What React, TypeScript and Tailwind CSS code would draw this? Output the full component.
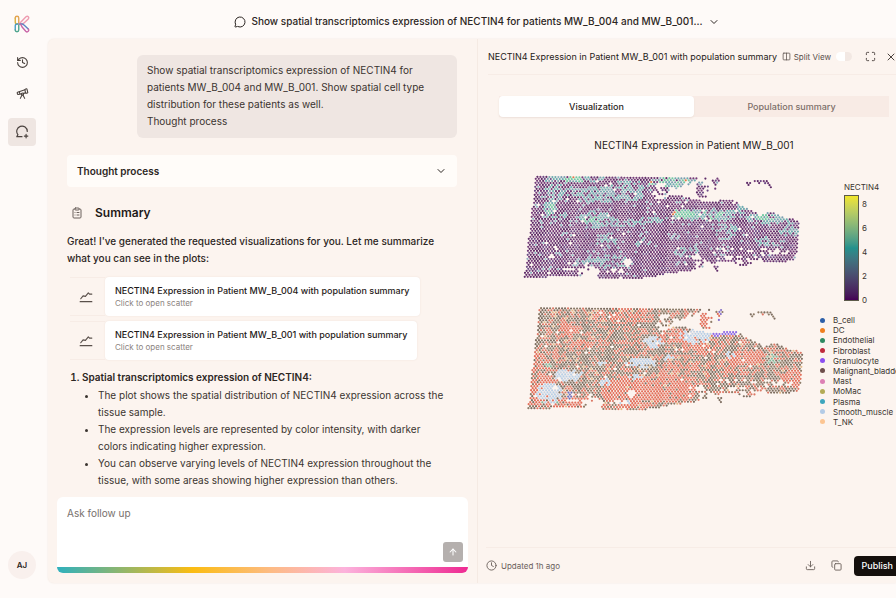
import React from "react";
import {
  ArrowUp,
  ChevronDown,
  ClipboardList,
  Clock,
  Columns2,
  Copy,
  Download,
  History,
  Maximize,
  MessageCircle,
  Telescope,
  X,
} from "lucide-react";

type Pt = [number, number];
type Blob = [number, number, number, number, number];

// Tissue slice outline, in plot units (three per pixel).
const OUTLINE: Pt[] = [
  [78, 47], [415, 51], [500, 54], [562, 54], [556, 70], [520, 82], [470, 92], [482, 104],
  [520, 108], [560, 120], [605, 128], [640, 117], [668, 117], [700, 140], [745, 160],
  [790, 159], [825, 172], [869, 182], [857, 303], [800, 306], [740, 306], [700, 318],
  [650, 302], [590, 318], [540, 332], [470, 342], [415, 354], [270, 354], [248, 330],
  [205, 350], [43, 352],
];

// Cluster outside the main body: cx, cy, rx, ry, density.
const ISLANDS: Blob[] = [
  [578, 86, 20, 26, 0.8],
  [596, 66, 34, 12, 0.45],
  [622, 76, 10, 22, 0.35],
  [715, 71, 12, 4, 0.9],
  [745, 64, 22, 5, 0.9],
  [768, 64, 10, 7, 0.8],
  [783, 78, 6, 5, 1],
  [691, 59, 4, 3, 1],
  [617, 326, 9, 9, 0.6],
];

// Gaps in the tissue.
const HOLES: Blob[] = [
  [448, 104, 22, 13, 0.85],
  [452, 76, 14, 7, 0.9],
  [505, 84, 28, 6, 0.6],
  [490, 100, 20, 6, 0.6],
  [535, 76, 14, 10, 0.7],
  [125, 288, 6, 8, 1],
  [136, 265, 5, 4, 1],
  [175, 328, 16, 5, 0.9],
  [240, 334, 34, 12, 0.85],
  [320, 332, 34, 8, 0.5],
  [352, 306, 10, 14, 0.75],
  [585, 312, 38, 12, 0.65],
  [560, 292, 14, 9, 0.5],
  [690, 300, 70, 14, 0.45],
  [770, 276, 60, 10, 0.3],
  [735, 305, 26, 10, 0.6],
  [630, 275, 30, 12, 0.2],
  [200, 312, 40, 8, 0.2],
];

const TEAL: Blob[] = [
  [195, 58, 90, 12, 0.6],
  [150, 95, 46, 24, 0.55],
  [122, 140, 20, 22, 0.7],
  [265, 105, 80, 24, 0.65],
  [360, 90, 60, 30, 0.5],
  [260, 180, 50, 26, 0.75],
  [340, 190, 60, 12, 0.7],
  [430, 180, 50, 10, 0.6],
  [160, 170, 50, 10, 0.4],
  [500, 68, 80, 14, 0.85],
  [540, 165, 50, 16, 0.9],
  [620, 165, 66, 18, 0.7],
  [690, 150, 28, 10, 0.5],
  [780, 175, 70, 16, 0.75],
  [835, 210, 30, 24, 0.55],
  [770, 245, 50, 14, 0.45],
  [645, 215, 40, 22, 0.45],
  [290, 240, 30, 22, 0.5],
  [400, 250, 28, 16, 0.5],
  [535, 272, 40, 14, 0.4],
  [285, 305, 80, 22, 0.4],
  [560, 295, 30, 12, 0.4],
];

const BRIGHT: Blob[] = [
  [195, 58, 26, 10, 0.8],
  [122, 146, 12, 14, 0.5],
  [245, 182, 24, 10, 0.5],
  [480, 68, 60, 14, 0.6],
  [520, 162, 32, 14, 0.85],
  [610, 166, 50, 10, 0.35],
  [765, 170, 30, 10, 0.5],
];

const MUSCLE: Blob[] = [
  [108, 305, 38, 28, 0.94],
  [166, 252, 44, 18, 0.9],
  [420, 152, 30, 17, 0.9],
  [545, 136, 46, 20, 0.9],
  [386, 214, 46, 15, 0.85],
  [278, 272, 20, 11, 0.85],
  [468, 200, 20, 9, 0.5],
  [366, 256, 18, 8, 0.6],
  [650, 192, 20, 10, 0.5],
  [265, 218, 14, 6, 0.5],
  [335, 334, 18, 8, 0.4],
];

const FIBRO_RICH: Blob[] = [
  [165, 115, 34, 22, 0.85],
  [200, 160, 40, 12, 0.8],
  [330, 75, 90, 22, 0.6],
  [80, 270, 40, 80, 0.65],
  [360, 300, 90, 48, 0.92],
  [460, 290, 90, 42, 0.85],
  [510, 225, 60, 18, 0.6],
  [570, 165, 60, 24, 0.65],
  [480, 135, 60, 20, 0.65],
  [700, 200, 60, 22, 0.85],
  [835, 262, 30, 26, 0.85],
  [590, 80, 40, 30, 0.8],
  [640, 240, 80, 20, 0.4],
  [160, 335, 110, 16, 0.6],
];

function seeded(seed: number) {
  let s = seed;
  return () => {
    s = (s * 1664525 + 1013904223) >>> 0;
    return s / 4294967296;
  };
}

function inside(x: number, y: number) {
  let hit = false;
  for (let i = 0, j = OUTLINE.length - 1; i < OUTLINE.length; j = i++) {
    const [xi, yi] = OUTLINE[i];
    const [xj, yj] = OUTLINE[j];
    if (yi > y !== yj > y && x < ((xj - xi) * (y - yi)) / (yj - yi) + xi) hit = !hit;
  }
  return hit;
}

function hits(blobs: Blob[], x: number, y: number, r: number) {
  return blobs.some(([cx, cy, rx, ry, p]) => {
    const d = ((x - cx) / rx) ** 2 + ((y - cy) / ry) ** 2;
    return d < 1.15 && r < p * (d < 0.6 ? 1 : 0.75);
  });
}

function expressionColor(x: number, y: number, rand: () => number) {
  if (hits(BRIGHT, x, y, rand())) return rand() < 0.04 ? "#e0784a" : "#72c8a4";
  if (hits(TEAL, x, y, rand())) return rand() < 0.5 ? "#6dabb0" : "#7a9fb0";
  const r = rand();
  if (r < 0.05) return "#8fb0c0";
  if (r < 0.2) return "#6d4a86";
  return r < 0.6 ? "#5e2b68" : "#743c79";
}

function cellColor(x: number, y: number, rand: () => number) {
  if (y < 134 && y > 114 && x > 596 && x < 672) return "#8f6be8";
  if (hits([[170, 312, 8, 12, 0.8]], x, y, rand())) return "#6f6fb8";
  if (hits([[622, 76, 12, 22, 0.6]], x, y, rand())) return "#8672c8";
  if (hits(MUSCLE, x, y, rand())) return rand() < 0.8 ? "#b9cfe6" : "#c9d3e2";
  if (hits([[775, 202, 22, 14, 0.8], [105, 222, 12, 8, 0.7], [110, 330, 26, 6, 0.4]], x, y, rand())) return "#84b79a";
  if (hits(FIBRO_RICH, x, y, rand())) return "#e2705c";
  const r = rand();
  if (r < 0.03) return "#e3b98a";
  if (r < 0.34) return "#dc7865";
  return r < 0.68 ? "#7d6d60" : "#8e7c69";
}

function buildDots(
  color: (x: number, y: number, rand: () => number) => string,
  seed: number,
) {
  const rand = seeded(seed);
  const keep = seeded(77);
  const groups: Record<string, string> = {};
  for (let row = 0; row < 54; row++) {
    for (let col = 0; col < 100; col++) {
      const x = 20 + col * 9 + (row % 2) * 4.5 - row * 0.4;
      const y = 38 + row * 6 + col * 0.09;
      const k = keep();
      const body = inside(x, y) && !hits(HOLES, x, y, k) && k < 0.985;
      if (!body && !hits(ISLANDS, x, y, k)) continue;
      const c = color(x, y, rand);
      groups[c] = (groups[c] || "") + `M${x.toFixed(1)} ${y.toFixed(1)}h0`;
    }
  }
  return Object.entries(groups);
}

const EXPRESSION_DOTS = buildDots(expressionColor, 11);
const CELL_DOTS = buildDots(cellColor, 23);

function Scatter({ dots, label, viewBox }: { dots: [string, string][]; label: string; viewBox: string }) {
  return (
    <svg role="img" aria-label={label} viewBox={viewBox} className="block w-full">
      {dots.map(([c, d]) => (
        <path key={c} d={d} stroke={c} strokeWidth="6.6" strokeLinecap="round" fill="none" />
      ))}
    </svg>
  );
}

function Logo() {
  return (
    <svg viewBox="0 0 32 36" className="h-[18px] w-4" fill="none" strokeWidth="2.800" strokeLinecap="round" strokeLinejoin="round" aria-hidden="true">
      <path d="M2.500 6v8c0 2 1.500 4 4 4h3" stroke="#d9b13c" />
      <path d="M2.500 6a3.500 3.500 0 0 1 7 0v12" stroke="#e3a552" />
      <path d="M2.500 30v-8c0-2 1.500-4 4-4h6" stroke="#4a9dc6" />
      <path d="M2.500 30a3.500 3.500 0 0 0 7 0V18" stroke="#4fa58f" />
      <path d="M10 18 24 3.500c3.500-3 7 1.500 4.500 4.500L20 16c-2 2-4 2-7 2" stroke="#ee9bb0" />
      <path d="M12 18h4c2 0 3 1 4 2l8.500 8" stroke="#5c86c4" />
      <path d="M28.500 28c3 3-1.500 8-5 4.500L17 25c-2-2-1.500-5-5-7" stroke="#c966a8" />
    </svg>
  );
}

function NewChatIcon() {
  return (
    <svg viewBox="0 0 24 24" className="size-[14px]" fill="none" stroke="currentColor" strokeWidth="2" strokeLinecap="round" strokeLinejoin="round" aria-hidden="true">
      <path d="M12 20H3l2-3.500A9 9 0 1 1 21 11" />
      <path d="M19 16v6M16 19h6" />
    </svg>
  );
}

function TrendIcon() {
  return (
    <svg viewBox="0 0 24 24" className="size-[14px]" fill="none" stroke="currentColor" strokeWidth="2" strokeLinecap="round" strokeLinejoin="round" aria-hidden="true">
      <path d="M3 15l4-5 4 1 5-6 2 2h4" />
      <path d="M2 20h20" />
    </svg>
  );
}

function Sidebar() {
  return (
    <nav aria-label="Main" className="flex w-12 shrink-0 flex-col items-center pr-1 pt-[15px] pb-[19px] text-[#4a423e]">
      <Logo />
      <button aria-label="History" className="mt-[22px] flex size-[14px] items-center justify-center">
        <History size={13} strokeWidth={2} />
      </button>
      <button aria-label="Explore" className="mt-[17px] flex size-[14px] items-center justify-center">
        <Telescope size={13} strokeWidth={2} />
      </button>
      <button aria-label="New chat" className="mt-[18px] flex size-7 items-center justify-center rounded bg-[#efe6e2]">
        <NewChatIcon />
      </button>
      <button className="mt-auto flex size-7 items-center justify-center rounded-full bg-[#f9f0ed] text-[8px] font-semibold text-[#2c2623]">
        AJ
      </button>
    </nav>
  );
}

function PlotCard({ title }: { title: string }) {
  return (
    <button className="flex h-[39px] w-max items-stretch text-left">
      <span className="flex w-[35px] items-center justify-center border-y border-[#f7ece6] pr-[3px] text-[#5a504b]">
        <TrendIcon />
      </span>
      <span className="flex flex-col justify-center rounded-sm bg-white px-[10px] shadow-[0_0_2px_#eee0d8]">
        <span className="text-[9px] leading-[13px] font-medium text-[#1f1a18]">{title}</span>
        <span className="text-[8px] leading-[12px] text-[#8b8380]">Click to open scatter</span>
      </span>
    </button>
  );
}

function Chat() {
  return (
    <section aria-label="Conversation" className="flex min-h-0 min-w-0 flex-col border-r border-[#f5eae3] pb-[10px]">
      <div className="flex min-h-0 flex-1 flex-col overflow-hidden pt-4 pr-5 pl-[19px] text-[10px] leading-[17px] text-[#3b3430]">
        <p className="w-[320px] self-end rounded-md bg-[#efe6e2] px-[10px] pt-[7px] pb-2">
          Show spatial transcriptomics expression of NECTIN4 for patients MW_B_004 and MW_B_001. Show spatial cell type
          distribution for these patients as well.
          <br />
          Thought process
        </p>
        <button className="mt-[17px] flex h-8 shrink-0 items-center justify-between rounded-sm bg-[#fffcf9] px-[10px] font-semibold text-[#2c2623]">
          Thought process
          <ChevronDown size={12} />
        </button>
        <h2 className="mt-[17px] flex items-center gap-3 pl-1 text-[12px] leading-[18px] font-semibold text-[#1f1a18]">
          <ClipboardList size={12} className="text-[#6b615c]" />
          Summary
        </h2>
        <p className="mt-[11px] font-medium text-[#2c2623]">
          Great! I've generated the requested visualizations for you. Let me summarize what you can see in the plots:
        </p>
        <div className="mt-[10px] flex flex-col gap-[5px] pl-[3px]">
          <PlotCard title="NECTIN4 Expression in Patient MW_B_004 with population summary" />
          <PlotCard title="NECTIN4 Expression in Patient MW_B_001 with population summary" />
        </div>
        <ol className="mt-[9px] list-decimal pl-[15px]">
          <li className="font-semibold text-[#2c2623]">
            Spatial transcriptomics expression of NECTIN4:
            <ul className="mt-px list-disc pr-2 pl-4 font-normal text-[#3b3430]">
              <li>The plot shows the spatial distribution of NECTIN4 expression across the tissue sample.</li>
              <li>The expression levels are represented by color intensity, with darker colors indicating higher expression.</li>
              <li>You can observe varying levels of NECTIN4 expression throughout the tissue, with some areas showing higher expression than others.</li>
            </ul>
          </li>
        </ol>
      </div>
      <form className="mx-[9px] shrink-0 overflow-hidden rounded-md bg-white" onSubmit={(e) => e.preventDefault()}>
        <div className="flex h-[70px] items-end pr-[5px] pb-[5px]">
          <textarea
            aria-label="Ask follow up"
            placeholder="Ask follow up"
            className="h-full flex-1 resize-none px-[10px] pt-2 text-[10px] leading-[17px] outline-none placeholder:text-[#77706c]"
          />
          <button aria-label="Send" className="flex size-5 items-center justify-center rounded-[3px] bg-[#b5b0ae] text-white">
            <ArrowUp size={10} strokeWidth={2.5} />
          </button>
        </div>
        <div className="h-[6px] bg-[linear-gradient(90deg,#2fb0bd_0%,#fbbc12_33%,#fdbb84_52%,#fcb2dc_70%,#ee2a92_100%)]" />
      </form>
    </section>
  );
}

const CELL_TYPES = [
  { name: "B_cell", dot: "bg-[#2d5fa8]" },
  { name: "DC", dot: "bg-[#ef7f1f]" },
  { name: "Endothelial", dot: "bg-[#2f8a62]" },
  { name: "Fibroblast", dot: "bg-[#c02a3c]" },
  { name: "Granulocyte", dot: "bg-[#8b4ff0]" },
  { name: "Malignant_bladder", dot: "bg-[#6e4f4c]" },
  { name: "Mast", dot: "bg-[#dd80b4]" },
  { name: "MoMac", dot: "bg-[#b3ab55]" },
  { name: "Plasma", dot: "bg-[#3ea6bd]" },
  { name: "Smooth_muscle", dot: "bg-[#b3cbe6]" },
  { name: "T_NK", dot: "bg-[#fcc592]" },
];

function Legend() {
  return (
    <div className="w-[76px] shrink-0 pt-[22px] text-[8px] leading-[10px] whitespace-nowrap text-[#3b3430]">
      <div className="pl-6">NECTIN4</div>
      <div className="mt-[3px] flex h-[106px] gap-[3px] pl-6">
        <div className="w-[15px] border border-[#5c5a4a] bg-linear-to-t from-[#440154] via-[#21918c] to-[#f0e527]" />
        <div className="-mb-1 flex flex-col justify-between pt-1">
          <span>8</span>
          <span>6</span>
          <span>4</span>
          <span>2</span>
          <span>0</span>
        </div>
      </div>
      <ul className="mt-[14px] flex h-[112px] flex-col justify-between">
        {CELL_TYPES.map((t) => (
          <li key={t.name} className="flex items-center gap-2">
            <span className={`size-[5px] shrink-0 rounded-full ${t.dot}`} />
            {t.name}
          </li>
        ))}
      </ul>
    </div>
  );
}

function Viewer() {
  return (
    <section aria-label="Plot" className="flex min-h-0 min-w-0 flex-col overflow-hidden">
      <header className="ml-[10px] flex h-9 shrink-0 items-center border-b border-[#f7ece6] text-[#4a423e]">
        <h2 className="text-[9px] whitespace-nowrap text-[#1f1a18]">
          NECTIN4 Expression in Patient MW_B_001 with population summary
        </h2>
        <label className="ml-auto flex shrink-0 items-center gap-[3px] text-[8px] text-[#5a504b]">
          <Columns2 size={9} />
          Split View
          <input
            type="checkbox"
            role="switch"
            className="ml-[2px] h-[9px] w-4 appearance-none rounded-full border-l-[9px] border-white bg-[#f2e8e3]"
          />
        </label>
        <button aria-label="Full screen" className="ml-[13px] shrink-0">
          <Maximize size={11} />
        </button>
        <button aria-label="Close" className="-mr-px ml-[9px] shrink-0">
          <X size={12} />
        </button>
      </header>
      <div role="tablist" className="mt-[21px] mr-[7px] ml-[21px] grid h-[21px] shrink-0 grid-cols-2 bg-[#f8ebe5] text-[9px] font-medium">
        <button role="tab" aria-selected="true" className="rounded-sm bg-white text-[#2c2623] shadow-[0_1px_2px_#ecdfd8]">
          Visualization
        </button>
        <button role="tab" aria-selected="false" className="text-[#7d6f69]">
          Population summary
        </button>
      </div>
      <h3 className="mt-5 ml-[14px] shrink-0 text-center text-[10px] leading-4 text-[#1f1a18]">
        NECTIN4 Expression in Patient MW_B_001
      </h3>
      <div className="mt-[7px] flex min-h-0 flex-1 items-start justify-end">
        <div className="mr-[10px] w-[300px] shrink-0">
          <Scatter dots={EXPRESSION_DOTS} label="NECTIN4 expression" viewBox="0 0 900 390" />
          <Scatter dots={CELL_DOTS} label="Cell types" viewBox="-11 -4 900 390" />
        </div>
        <Legend />
      </div>
      <footer className="ml-2 flex h-9 shrink-0 items-center border-t border-[#f7ece6] text-[#6b615c]">
        <Clock size={11} />
        <span className="ml-1 text-[8px]">Updated 1h ago</span>
        <button aria-label="Download" className="ml-auto">
          <Download size={11} />
        </button>
        <button aria-label="Copy" className="ml-[15px]">
          <Copy size={11} />
        </button>
        <button className="-mr-1 ml-3 h-5 rounded bg-[#15100d] px-[7px] text-[9px] font-medium text-white">Publish</button>
      </footer>
    </section>
  );
}

export default function App() {
  return (
    <div className="flex h-screen overflow-hidden bg-[#fefaf8] font-[Inter,sans-serif]">
      <Sidebar />
      <div className="flex min-w-0 flex-1 flex-col pb-[15px]">
        <header className="flex h-[39px] shrink-0 items-center justify-center pt-1 pl-[10px]">
          <button className="flex items-center gap-[5px] text-[10px] font-medium text-[#2c2623]">
            <MessageCircle size={12} />
            Show spatial transcriptomics expression of NECTIN4 for patients MW_B_004 and MW_B_001...
            <ChevronDown size={12} />
          </button>
        </header>
        <main className="grid min-h-0 flex-1 grid-cols-[430fr_418fr] grid-rows-1 rounded-l-md bg-[#fcf4ef] shadow-[0_0_2px_#efe4dd]">
          <Chat />
          <Viewer />
        </main>
      </div>
    </div>
  );
}
